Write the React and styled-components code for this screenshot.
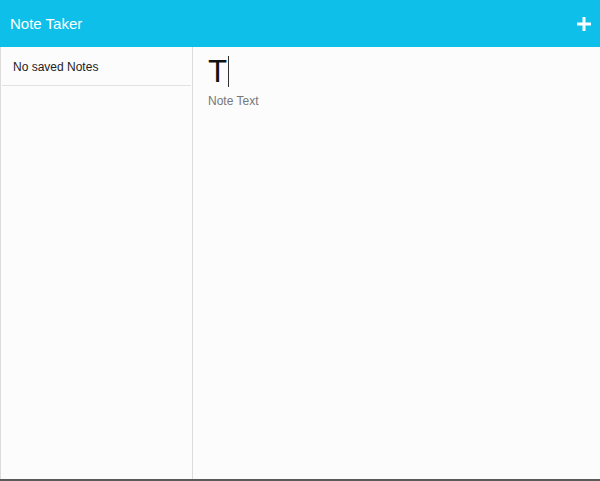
import React from 'react';
import styled, { createGlobalStyle } from 'styled-components';

const GlobalStyle = createGlobalStyle`
  html, body {
    margin: 0;
    padding: 0;
    background: #fcfcfd;
    font-family: "Liberation Sans", Arial, sans-serif;
  }
`;

const Page = styled.div`
  display: flex;
  flex-direction: column;
  height: 481px;
  box-sizing: border-box;
  border-bottom: 2px solid #5a5a5a;
`;

const Header = styled.header`
  display: flex;
  align-items: center;
  justify-content: space-between;
  height: 47px;
  padding: 0 9px 0 10px;
  background-color: #0ebfe9;
  color: #fff;
  flex-shrink: 0;
`;

const Title = styled.h1`
  margin: 0;
  font-size: 15px;
  font-weight: 400;
`;

const AddButton = styled.button`
  border: none;
  background: none;
  padding: 0;
  width: 14px;
  height: 14px;
  display: flex;
  cursor: pointer;
`;

const Body = styled.div`
  display: flex;
  flex: 1;
  min-height: 0;
`;

const Sidebar = styled.aside`
  width: 189px;
  border-left: 1px solid #dcdcdc;
  border-right: 1px solid #dcdcdc;
  background: #fcfcfd;
  padding: 0 1px;
`;

const NoteItem = styled.div`
  padding: 13px 11px 11px;
  font-size: 12px;
  color: #222;
  border-bottom: 1px solid #e2e2e2;
`;

const Editor = styled.main`
  flex: 1;
  padding: 7px 15px;
  background: #fcfcfd;
`;

const NoteTitle = styled.div`
  display: flex;
  align-items: center;
  height: 34px;
  font-family: Roboto, "Liberation Sans", sans-serif;
  font-weight: 400;
  font-size: 32px;
  color: #111;
  line-height: 1;
`;

const Caret = styled.span`
  display: inline-block;
  width: 1px;
  height: 31px;
  margin-left: 1px;
  background: #333;
`;

const NoteText = styled.div`
  margin-top: 6px;
  font-size: 12px;
  color: #777;
`;

function App() {
  return (
    <>
      <GlobalStyle />
      <Page>
        <Header>
          <Title>Note Taker</Title>
          <AddButton aria-label="New note">
            <svg width="14" height="14" viewBox="0 0 14 14">
              <path d="M7 0v14M0 7h14" stroke="#fff" strokeWidth="3" />
            </svg>
          </AddButton>
        </Header>
        <Body>
          <Sidebar>
            <NoteItem>No saved Notes</NoteItem>
          </Sidebar>
          <Editor>
            <NoteTitle>
              T<Caret />
            </NoteTitle>
            <NoteText>Note Text</NoteText>
          </Editor>
        </Body>
      </Page>
    </>
  );
}

export default App;
